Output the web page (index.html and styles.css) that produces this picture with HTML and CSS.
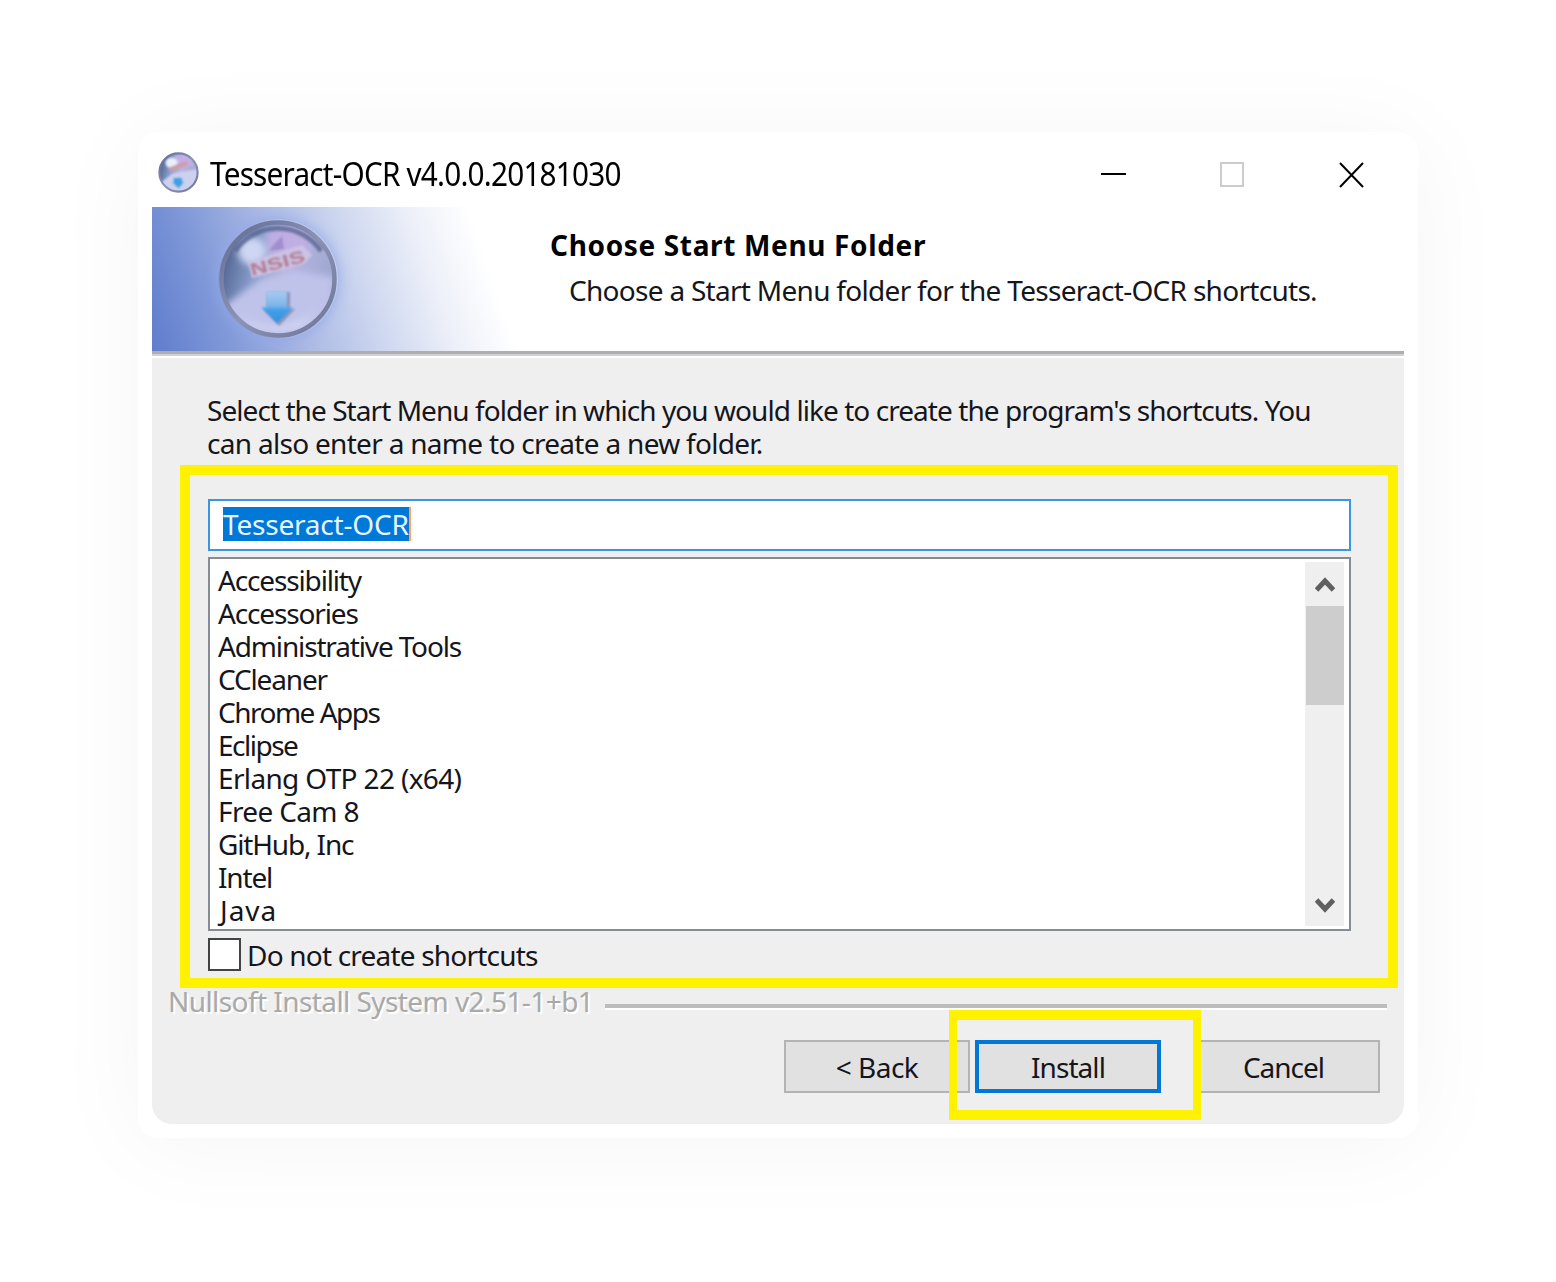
FILE: index.html
```html
<!DOCTYPE html>
<html lang="en">
<head>
<meta charset="utf-8">
<title>Tesseract-OCR Setup</title>
<link rel="stylesheet" href="styles.css">
</head>
<body>
<main class="window">
  <header class="titlebar">
    <svg class="app-icon" viewBox="0 0 120 120">
      <circle cx="60" cy="60" r="57" fill="url(#glass)"/>
      <g clip-path="url(#inside)">
        <path d="M0 96L44 62L116 50V120H20z" fill="#cdd0ee" filter="url(#soft)"/>
        <path d="M50 10L84 8L106 40L50 44z" fill="#c3aee6" filter="url(#soft)"/>
        <ellipse cx="40" cy="32" rx="18" ry="16" fill="#e8eefb" filter="url(#soft)"/>
        <path d="M32 46L84 26L88 38L34 58z" fill="#cf9da4" filter="url(#soft)"/>
      </g>
      <path d="M46 76H70V88H76L60 106L42 88H46z" fill="#3d9fe4" filter="url(#soft)"/>
      <circle cx="60" cy="60" r="56" fill="none" stroke="url(#rim)" stroke-width="6"/>
    </svg>
    <h1 class="title"><span class="title-text">Tesseract-OCR v4.0.0.20181030</span></h1>
    <div class="controls">
      <svg width="26" height="26" viewBox="0 0 26 26"><path d="M0 12h25" stroke="#000" stroke-width="2"/></svg>
      <svg width="26" height="26" viewBox="0 0 26 26"><rect x="1" y="1" width="22" height="23" fill="none" stroke="#ccc" stroke-width="2"/></svg>
      <svg width="26" height="26" viewBox="0 0 26 26"><path d="M1 1l23 24M24 1L1 25" stroke="#000" stroke-width="2"/></svg>
    </div>
  </header>
  <section class="banner">
    <svg class="banner-disc" viewBox="0 0 120 120">
      <defs>
        <linearGradient id="rim" x1="0" y1="0" x2="1" y2="1"><stop offset="0" stop-color="#5f6a94"/><stop offset=".5" stop-color="#8c93b5"/><stop offset="1" stop-color="#6c7599"/></linearGradient>
        <linearGradient id="glass" x1="0" y1=".35" x2="1" y2=".6"><stop offset="0" stop-color="#4f628f"/><stop offset=".3" stop-color="#8a9fcd"/><stop offset=".55" stop-color="#b9b6e2"/><stop offset="1" stop-color="#98a6cd"/></linearGradient>
        <linearGradient id="arrow" x1="0" y1="0" x2="0" y2="1"><stop offset="0" stop-color="#a9c9ef"/><stop offset=".45" stop-color="#7fb6ea"/><stop offset=".6" stop-color="#3f9fea"/><stop offset="1" stop-color="#3492dc"/></linearGradient>
        <filter id="soft" x="-20%" y="-20%" width="140%" height="140%"><feGaussianBlur stdDeviation="3.500"/></filter>
        <filter id="fine" x="-20%" y="-20%" width="140%" height="140%"><feGaussianBlur stdDeviation="1"/></filter>
        <clipPath id="inside"><circle cx="60" cy="60" r="56"/></clipPath>
      </defs>
      <circle cx="60" cy="60" r="57" fill="url(#glass)"/>
      <g clip-path="url(#inside)">
        <path d="M4 88L44 60L78 52L116 58V120H20z" fill="#bfc3ea" filter="url(#soft)"/>
        <path d="M48 12L84 8L94 30L50 40z" fill="#bfaee4" filter="url(#soft)"/>
        <path d="M50 32L64 17L66 30z" fill="#9a86c6" opacity=".8" filter="url(#fine)"/>
        <ellipse cx="34" cy="32" rx="14" ry="14" fill="#cdd6f2" filter="url(#soft)"/>
        <path d="M30 43L84 26L94 36L86 45L34 59z" fill="#cdc3e4" filter="url(#fine)"/>
        <path d="M18 96Q60 120 98 92L84 108Q60 116 34 108z" fill="#d3d6f3" filter="url(#soft)"/>
      </g>
      <text class="disc-label" x="34" y="57" transform="rotate(-15 34 57)" textLength="56" lengthAdjust="spacingAndGlyphs" filter="url(#fine)">NSIS</text>
      <path d="M49 73H72V90H77L61 107L45 90H50z" fill="#67769f" opacity=".6" filter="url(#fine)"/>
      <path d="M48 72H69V88H75L59 104L43 88H48z" fill="url(#arrow)" filter="url(#fine)"/>
      <circle cx="60" cy="60" r="56.500" fill="none" stroke="url(#rim)" stroke-width="4.500"/>
      <path d="M17 32A52 52 0 0 1 103 32" fill="none" stroke="#56628c" stroke-width="5" opacity=".75" filter="url(#fine)"/>
    </svg>
    <div class="banner-copy">
      <h2 class="heading">Choose Start Menu Folder</h2>
      <p class="subheading">Choose a Start Menu folder for the Tesseract-OCR shortcuts.</p>
    </div>
  </section>
  <section class="content">
    <p class="intro"><span class="intro-first">Select the Start Menu folder in which you would like to create the program's shortcuts. You</span><br>can also enter a name to create a new folder.</p>
    <div class="field"><span class="selection">Tesseract-OCR</span></div>
    <div class="listbox">
      <ul class="folders">
        <li>Accessibility</li>
        <li>Accessories</li>
        <li>Administrative Tools</li>
        <li>CCleaner</li>
        <li class="tight">Chrome Apps</li>
        <li class="tight">Eclipse</li>
        <li class="loose">Erlang OTP 22 (x64)</li>
        <li class="loose">Free Cam 8</li>
        <li>GitHub, Inc</li>
        <li>Intel</li>
        <li class="wide">Java</li>
      </ul>
      <div class="scrollbar">
        <svg width="20" height="16" viewBox="0 0 20 16"><path d="M1.500 14L10 5L18.500 14" fill="none" stroke="#606060" stroke-width="5"/></svg>
        <div class="thumb"></div>
        <svg width="20" height="16" viewBox="0 0 20 16"><path d="M1.500 2L10 11L18.500 2" fill="none" stroke="#606060" stroke-width="5"/></svg>
      </div>
    </div>
    <div class="option"><span class="checkbox"></span><span class="option-text">Do not create shortcuts</span></div>
    <div class="brand"><span class="brand-text">Nullsoft Install System v2.51-1+b1</span><span class="rule"></span></div>
    <div class="actions">
      <button class="button back">&lt; Back</button>
      <button class="button primary">Install</button>
      <button class="button cancel">Cancel</button>
    </div>
  </section>
  <div class="mark mark-options"></div>
  <div class="mark mark-install"></div>
</main>
</body>
</html>
```
FILE: styles.css
```css
* { box-sizing: border-box; }
body {
  margin: 0;
  width: 1556px;
  height: 1282px;
  padding: 132px 138px;
  background: #fff;
  color: #15151c;
  font: 28px/33px "Noto Sans", sans-serif;
}
h1, h2, p, ul { margin: 0; padding: 0; font-weight: 400; }
h1, h2, p, li { white-space: nowrap; }
.window {
  position: relative;
  width: 1280px;
  height: 1006px;
  padding: 0 14px 14px;
  border-radius: 20px;
  background: #fff;
  box-shadow: 0 6px 100px rgba(0, 0, 0, .045);
}
.titlebar {
  display: flex;
  align-items: center;
  height: 75px;
  padding: 5px 39px 0 6px;
}
.app-icon { width: 41px; height: 41px; margin-top: 1px; }
.title { flex: 1; margin-left: 11px; padding-top: 3px; font-size: 32px; line-height: 40px; color: #000; }
.title-text { display: inline-block; letter-spacing: -.87px; transform: scaleX(.93); transform-origin: left; }
.controls { display: flex; gap: 93px; padding-top: 5px; }
.banner {
  display: flex;
  height: 151px;
  border-bottom: 2px solid #fff;
  background:
    linear-gradient(#acaeb2 0 3px, #d2d2d2 3px) bottom / 100% 5px no-repeat,
    linear-gradient(71deg, #5f7ccc 0, #7f98d8 75px, #abb9e4 150px, #ccd6ef 220px, #edf0f9 290px, #fff 348px);
}
.banner-disc { width: 120px; height: 120px; margin: 12px 0 0 66px; border-radius: 50%; box-shadow: 0 0 14px #92a8ea; }
.disc-label { font: bold 17px "Liberation Sans", sans-serif; fill: #ab6f86; opacity: .85; }
.banner-copy { margin-left: 212px; padding-top: 22px; }
.heading { font-size: 28px; font-weight: 700; letter-spacing: .65px; color: #000; }
.subheading { margin: 12px 0 0 19px; letter-spacing: -.71px; }
.content {
  height: 766px;
  padding: 36px 53px 0 56px;
  border-radius: 0 0 20px 20px;
  background: #efefef;
}
.intro { margin-left: -1px; letter-spacing: -.7px; }
.intro-first { letter-spacing: -.94px; }
.field {
  display: flex;
  align-items: center;
  width: 1143px;
  height: 52px;
  margin-top: 39px;
  padding: 0 13px 3px;
  border: 2px solid #3c95e0;
  background: #fff;
}
.selection { height: 34px; border-right: 2px solid #f9a567; background: #0078d7; color: #e6f4ff; line-height: 34px; letter-spacing: -.2px; }
.listbox {
  display: flex;
  justify-content: space-between;
  width: 1143px;
  height: 374px;
  margin-top: 6px;
  padding: 3px 5px 3px 8px;
  border: 2px solid #868c96;
  background: #fff;
}
.folders { padding-top: 2px; list-style: none; letter-spacing: -1.15px; }
.tight { letter-spacing: -1.5px; }
.loose { letter-spacing: -.65px; }
.wide { padding-left: 2px; letter-spacing: 1px; }
.scrollbar { display: flex; flex-direction: column; align-items: center; width: 39px; padding: 14px 0 12px; background: #efefef; }
.thumb { width: 38px; height: 99px; margin: 14px 0 auto; background: #cdcdcd; }
.option { display: flex; margin-top: 7px; gap: 6px; }
.option-text { padding-top: 1px; letter-spacing: -.8px; }
.checkbox { width: 33px; height: 33px; border: 2px solid #434343; background: #fff; }
.brand { display: flex; align-items: center; margin: 13px -36px 0 -40px; color: #a9a9a9; text-shadow: 2px 2px #fff; }
.brand-text { letter-spacing: -.57px; }
.rule { flex: 1; height: 6px; margin: 11px 0 0 12px; border-top: 4px solid #bcbcbc; border-bottom: 2px solid #fff; }
.actions { display: flex; justify-content: flex-end; margin: 22px -29px 0 0; }
.button {
  width: 186px;
  height: 53px;
  padding: 2px 0 0;
  border: 2px solid #b3b3b3;
  background: #e1e1e1;
  color: inherit;
  font: inherit;
  letter-spacing: -.5px;
}
.primary { margin: 0 33px 0 5px; border: 4px solid #0078d7; letter-spacing: -.95px; }
.cancel { padding-right: 7px; letter-spacing: -1px; }
.mark { position: absolute; border: 10px solid #fff200; }
.mark-options { left: 42px; top: 333px; width: 1218px; height: 523px; }
.mark-install { left: 811px; top: 878px; width: 252px; height: 110px; border-width: 10px 8px; }
```
